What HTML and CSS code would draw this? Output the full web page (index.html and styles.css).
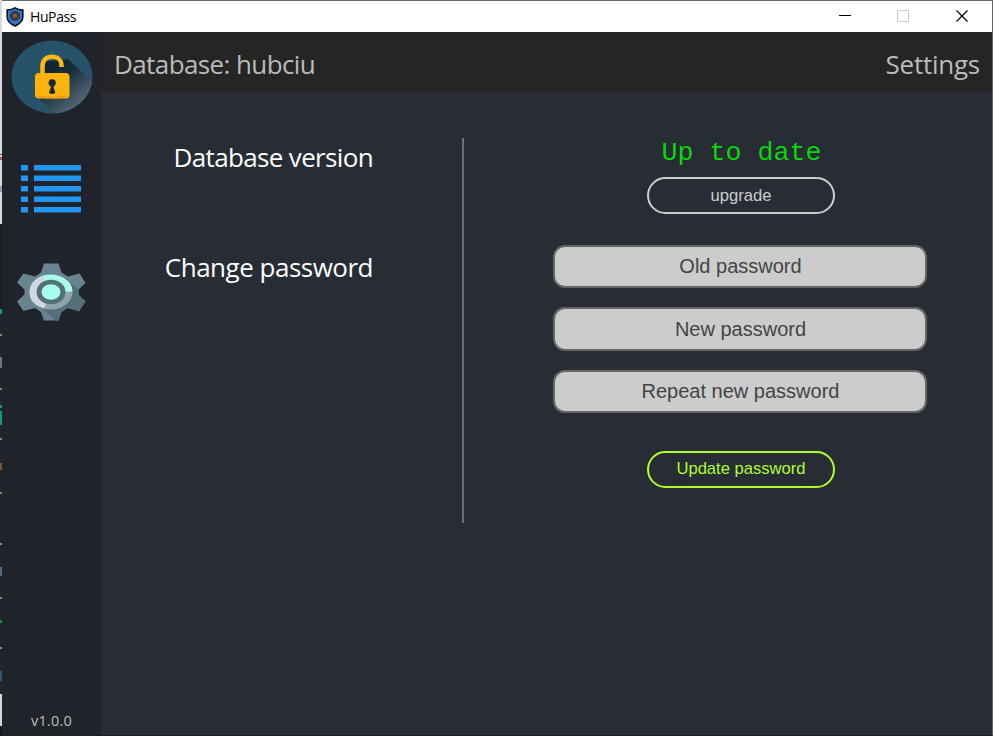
FILE: index.html
```
<!DOCTYPE html>
<html lang="en">
<head>
<meta charset="utf-8">
<title>HuPass</title>
<link rel="stylesheet" href="styles.css">
</head>
<body>
<div class="desktop">
<div class="window">
  <div class="titlebar">
    <svg class="app-icon" viewBox="0 0 18 20"><path d="M9 .8C6.5 2.6 4 3 1.2 3v7c0 4 3.300 7 7.800 9 4.500-2 7.800-5 7.800-9V3C14 3 11.500 2.600 9 .8z" fill="#2f78da" stroke="#101318" stroke-width="1.600"/><circle cx="9" cy="9" r="5" fill="#29262a"/><path d="M5 12V9q0-4 4-4t4 4v3l-4 2z" fill="#4a3b34"/><circle cx="9" cy="8.500" r="1.900" fill="#77604f"/></svg>
    <span class="app-name">HuPass</span>
    <svg class="controls" viewBox="0 0 148 31" shape-rendering="crispEdges"><path d="M0 14.500h12" stroke="#000"/><rect x="58.500" y="9.500" width="11" height="11" fill="none" stroke="#ccc"/><path d="M117.500 9.500l11 11m0-11l-11 11" stroke="#000" stroke-width="1.200" shape-rendering="auto"/></svg>
  </div>
  <div class="body">
    <nav class="sidebar">
      <svg class="lock" viewBox="0 0 82 74">
        <defs><linearGradient id="shade" x1="35" y1="25" x2="66" y2="62" gradientUnits="userSpaceOnUse"><stop offset="0" stop-color="#102532"/><stop offset=".4" stop-color="#172b38"/><stop offset="1" stop-color="#4d616e"/></linearGradient>
        <clipPath id="disc"><ellipse cx="41" cy="37" rx="40.500" ry="36.500"/></clipPath></defs>
        <ellipse cx="41" cy="37" rx="40.500" ry="36.500" fill="#265369"/>
        <path d="M31 22L57 19 90 50V80H52L25 56z" fill="url(#shade)" clip-path="url(#disc)"/>
        <path d="M31.500 36V26.500C31.500 20 35.500 16.800 41 16.800S50.500 20 50.500 25.500V27" fill="none" stroke="#fdb813" stroke-width="4.500"/>
        <rect x="24" y="33" width="34.500" height="25.500" rx="4" fill="#fdb30d"/>
        <path d="M26 55q15 3 30 0v2q-15 3-30 0z" fill="#f39c12"/>
        <path d="M41.200 39a4 4 0 0 1 2 7.300c-1 .7-.8 1.200-.3 2l1.500 4.500q-3.200 2.600-6.400 0l1.500-4.500c.5-.8.700-1.300-.3-2a4 4 0 0 1 2-7.300z" fill="#172a37"/>
      </svg>
      <svg class="list" viewBox="0 0 60 48" fill="#2196f3"><path d="M0 0h7v5.500H0zM13 0h47v5.500H13zM0 10.500h7V16H0zM13 10.500h47V16H13zM0 21h7v5.500H0zM13 21h47v5.500H13zM0 31.500h7V37H0zM13 31.500h47V37H13zM0 42h7v5.500H0zM13 42h47v5.500H13z"/></svg>
      <svg class="gear" viewBox="0 0 70 58">
        <defs><clipPath id="cog"><path d="M28 .5h14.500l3 10.500 6.500 4 11-4L69.500 21l-7 7v4l7 6.500L63 48.500l-11-4-6.500 3.500L42.500 57.500H28l-3-9.500-6-3.500-11 4L1 38.500 8.500 32v-4L1 20.500 8 10.500l11 4 6-3.500z"/></clipPath></defs>
        <path d="M28 .5h14.500l3 9 6.500 4 11.500-3L69.500 20l-7 6.500v5l7 7L63 48l-11.500-3-6 4-3 8.500H28l-3-8.500-6-4L7.500 48 1 38.500l7.500-7v-5L1 19.500l6.500-9L19 13.500l6-4z" fill="#698491"/>
        <path d="M50 17L80 40V70H54L22 42z" fill="#546e7a" clip-path="url(#cog)"/>
        <ellipse cx="35" cy="29" rx="21.500" ry="17.500" fill="#90a4ae"/>
        <path d="M35 29L25.500 13Q37 9 47.500 15 56.500 20 56.500 28.500z" fill="#a7ffeb"/>
        <path d="M35 29L25.500 13Q13.500 18 13.500 29.500T28 45.500z" fill="#cfd8dc"/>
        <ellipse cx="35" cy="29" rx="14.500" ry="12.200" fill="#546e7a"/><ellipse cx="35" cy="29" rx="9.500" ry="7.800" fill="#a7ffeb"/>
      </svg>
      <span class="version">v1.0.0</span>
    </nav>
    <main class="main">
      <header class="header"><span class="db">Database: hubciu</span><span class="page">Settings</span></header>
      <div class="settings">
        <div class="labels"><h2 class="label label-db">Database version</h2><h2 class="label label-pw">Change password</h2></div>
        <div class="forms">
          <div class="status">Up to date</div>
          <button class="pill upgrade">upgrade</button>
          <input class="field" placeholder="Old password" type="password">
          <input class="field field-new" placeholder="New password" type="password">
          <input class="field" placeholder="Repeat new password" type="password">
          <button class="pill update">Update password</button>
        </div>
      </div>
    </main>
  </div>
</div>
</div>
</body>
</html>
```
FILE: styles.css
```
* { box-sizing: border-box; }
body { margin: 0; width: 993px; height: 736px; overflow: hidden; font-family: "Open Sans", "Noto Sans", sans-serif; }
.desktop {
  height: 736px; padding-left: 2px;
  background: linear-gradient(#d9d9d9 0 154px, #55565a 154px 155px, #d9d9d9 155px 157px, #a8684a 157px 160px, #d9d9d9 160px 186px, #8fa0b8 186px 192px, #d9d9d9 192px 224px, #1c1c1c 224px 309px, #109b81 309px 314px, #242527 314px 334px, #888 334px 336px, #242527 336px 357px, #747477 357px 368px, #242527 368px 388px, #888 388px 390px, #242527 390px 405px, #109b81 405px 408px, #242527 408px 411px, #109b81 411px 425px, #242527 425px 438px, #888 438px 440px, #242527 440px 463px, #795a31 463px 470px, #242527 470px 492px, #888 492px 494px, #242527 494px 543px, #888 543px 545px, #242527 545px 567px, #536c82 567px 576px, #242527 576px 597px, #888 597px 599px, #242527 599px 620px, #198a35 620px 623px, #242527 623px 647px, #888 647px 649px, #242527 649px 671px, #385775 671px 681px, #242527 681px 694px, #d6d6d6 694px 726px, #15171b 726px) 0 0 / 2px 736px no-repeat, #282c34;
}
.window { height: 736px; display: flex; flex-direction: column; border-top: 1px solid #6b6a6b; border-right: 1px solid #65666a; border-bottom: 1px solid #1b1d22; }
.titlebar { height: 31px; flex: none; background: #fff; display: flex; align-items: center; padding-left: 4px; }
.app-icon { width: 18px; height: 20px; }
.app-name { margin-left: 6px; font-size: 14px; letter-spacing: -.4px; color: #000; line-height: 31px; }
.controls { width: 148px; height: 31px; margin-left: auto; margin-right: 5px; }
.body { flex: 1; display: flex; min-height: 0; }
.sidebar { width: 99px; background: #20232a; display: flex; flex-direction: column; align-items: center; padding-top: 8px; }
.lock { width: 82px; height: 74px; flex: none; }
.list { width: 60px; height: 48px; margin-top: 51px; margin-right: 1px; flex: none; }
.gear { width: 70px; height: 58px; margin-top: 50px; margin-right: 1px; flex: none; }
.version { margin-top: auto; margin-bottom: 4px; font-size: 14.500px; letter-spacing: .2px; line-height: 20px; color: #bbb; }
.main { flex: 1; background: #282c34; display: flex; flex-direction: column; }
.header { height: 61px; background: #252525; color: #bbb; display: flex; justify-content: space-between; padding: 14px 12px 0 13px; font-size: 26px; line-height: 36px; }
.db { letter-spacing: -.6px; }
.page { letter-spacing: -.25px; }
.settings { display: flex; padding-top: 45px; }
.labels { width: 363px; height: 385px; border-right: 2px solid #6c6e72; padding-right: 89px; color: #fff; text-align: right; }
.label { margin: 0; font-size: 26px; line-height: 36px; font-weight: 400; white-space: nowrap; }
.label-db { padding-top: 1px; letter-spacing: -.65px; }
.label-pw { margin-top: 74px; letter-spacing: -.5px; }
.forms { width: 374px; margin-left: 89px; display: flex; flex-direction: column; align-items: center; font-family: "Liberation Sans", sans-serif; }
.status { font: 26.670px/30px "Liberation Mono", monospace; color: #0ad60a; margin-left: 3px; }
.pill { width: 188px; height: 37px; border: 2px solid #ccc; border-radius: 19px; background: transparent; color: #ccc; font: 16.600px "Liberation Sans", sans-serif; padding: 0; margin-left: 2px; }
.upgrade { margin-top: 9px; margin-bottom: 31px; }
.field { width: 374px; height: 43px; margin: 0 0 19px; border: 2px solid #666; border-radius: 12px; background: #ccc; text-align: center; font: 20px "Liberation Sans", sans-serif; padding: 0 0 0 1px; }
.field-new { height: 44px; }
.field::placeholder { color: #444; opacity: 1; }
.update { margin-top: 19px; border-color: #adff2f; color: #adff2f; padding-bottom: 2px; }
```
